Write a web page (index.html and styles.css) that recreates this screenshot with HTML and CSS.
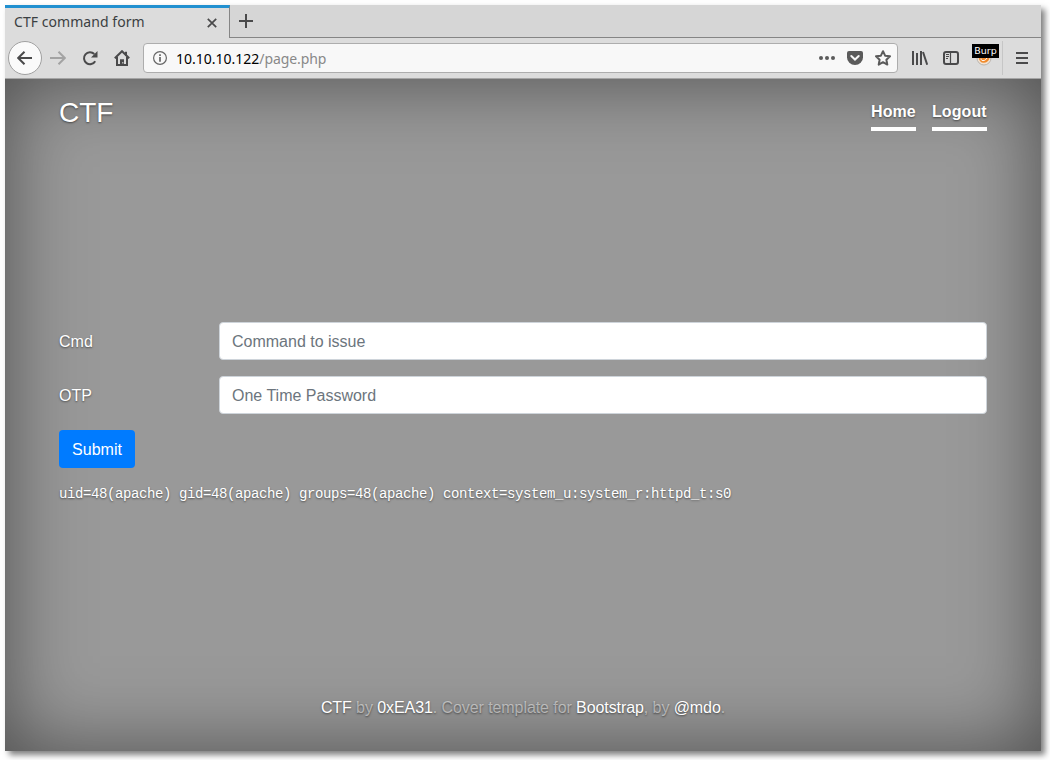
FILE: index.html
```html
<!DOCTYPE html>
<html lang="en">
<head>
<meta charset="utf-8">
<title>CTF command form</title>
<link rel="stylesheet" href="styles.css">
</head>
<body>
<div class="window">
  <div class="tabs">
    <div class="tab">
      <span class="tab-title">CTF command form</span>
      <svg class="tab-close" width="10" height="10" viewBox="0 0 10 10"><path d="M.8.8l8.4 8.4M9.2.8L.8 9.2"/></svg>
    </div>
    <div class="tab-rest">
      <svg width="14" height="14" viewBox="0 0 14 14"><path d="M7 0v14M0 7h14"/></svg>
    </div>
  </div>
  <div class="toolbar">
    <div class="back"><svg class="icon" viewBox="0 0 16 16"><path d="M15 8H1.5M7.500 1.700L1.200 8l6.300 6.300"/></svg></div>
    <svg class="icon forward" viewBox="0 0 16 16"><path d="M0 8h14.500M8.500 1.700L14.800 8l-6.300 6.300"/></svg>
    <svg class="icon reload" viewBox="0 0 16 16"><path d="M13.200 11.200A6 6 0 1 1 12.300 4"/><path class="solid" d="M15.500 1v6.500H9z"/></svg>
    <svg class="icon home" viewBox="0 0 16 16"><path d="M.8 8.300L8 1.200l7.200 7.100M3 7v8h10V7"/><path class="solid" d="M6 15V9.300h4V15zM11 1.800h2v4h-2z"/><path class="dot" d="M8.300 12h1v1.500h-1z"/></svg>
    <div class="urlbar">
      <svg class="info" width="14" height="14" viewBox="0 0 14 14"><circle cx="7" cy="7" r="6.400"/><path d="M7 6v4.700M7 3.300v1.700"/></svg>
      <span class="url"><span class="host">10.10.10.122</span>/page.php</span>
      <svg class="icon dots" viewBox="0 0 16 16"><circle cx="2" cy="8" r="2"/><circle cx="8" cy="8" r="2"/><circle cx="14" cy="8" r="2"/></svg>
      <svg class="icon pocket" viewBox="0 0 16 16"><path class="fill" d="M2 1h12a2 2 0 0 1 2 2v4.500a8 7.500 0 0 1-16 0V3a2 2 0 0 1 2-2z"/><path class="check" d="M4.300 6L8 9.500 11.700 6"/></svg>
      <svg class="icon star" viewBox="0 0 16 16"><path d="M8 1.200l2.100 4.500 4.900.6-3.600 3.400.9 4.900L8 12.200l-4.300 2.400.9-4.900L1 6.300l4.900-.6z"/></svg>
    </div>
    <svg class="icon library" viewBox="0 0 16 16"><path d="M1 1v14M5 3v12M9 1v14M11 2l4.200 12.700"/></svg>
    <svg class="icon sidebar" viewBox="0 0 16 16"><rect x="1" y="2" width="14" height="12" rx="2"/><path class="thin" d="M7.500 2v12M3 4.500h3M3 6.500h3M3 8.500h2"/></svg>
    <div class="proxy">
      <svg class="icon" viewBox="0 0 16 16"><circle class="ring" cx="8" cy="8" r="7"/><path class="flame" d="M2.500 7h11c0 3-2 5.500-5.500 5.800C5 13 3 11 2.500 7z"/><path class="gleam" d="M5 8.500c0 3 4 3 6-.5"/></svg>
      <span class="proxy-tag">Burp</span>
    </div>
    <div class="menu"><svg width="12" height="12" viewBox="0 0 12 12"><path d="M0 1h12M0 6h12M0 11h12"/></svg></div>
  </div>
  <div class="page">
    <header class="masthead">
      <h3 class="brand">CTF</h3>
      <nav class="nav"><a class="nav-home">Home</a><a class="nav-logout">Logout</a></nav>
    </header>
    <main class="form">
      <label class="row"><span class="label">Cmd</span><input class="field" type="text" placeholder="Command to issue"></label>
      <label class="row"><span class="label">OTP</span><input class="field" type="text" placeholder="One Time Password"></label>
      <button class="submit" type="button">Submit</button>
      <pre class="output">uid=48(apache) gid=48(apache) groups=48(apache) context=system_u:system_r:httpd_t:s0</pre>
    </main>
    <footer class="footer"><a>CTF</a> by <a>0xEA31</a>. Cover template for <a>Bootstrap</a>, by <a>@mdo</a>.</footer>
  </div>
</div>
</body>
</html>
```

FILE: styles.css
```css
* { box-sizing: border-box; }
body { margin: 0; padding: 5px; height: 760px; overflow: hidden; background: #fff; font-family: "Liberation Sans", sans-serif; }
.window { width: 1036px; height: 746px; display: flex; flex-direction: column; box-shadow: 4px 4px 6px rgba(0,0,0,.5); }
svg { display: block; flex: none; fill: none; stroke: #4a4a4b; stroke-width: 2; }
.icon { width: 16px; height: 16px; }

.tabs { display: flex; height: 33px; background: #dcdcdc; font-family: "Noto Sans", sans-serif; }
.tab { width: 225px; border-top: 3px solid #2190d0; border-right: 1px solid #858585; padding: 0 12px 0 9px; display: flex; align-items: center; justify-content: space-between; }
.tab-title { padding-bottom: 3px; font-size: 14px; color: #3b4042; letter-spacing: .05px; }
.tab-close { stroke-width: 1.7; }
.tab-rest { flex: 1; background: #d6d6d6; border-bottom: 1px solid #858585; padding: 9px 0 0 9px; }

.toolbar { height: 41px; flex: none; display: flex; align-items: center; background: #dcdcdc; border-bottom: 1px solid #a5a5a5; padding-left: 3px; font-family: "Noto Sans", sans-serif; }
.back { width: 34px; height: 34px; border: 1px solid #a0a0a0; border-radius: 50%; background: #fafafa; display: flex; align-items: center; justify-content: center; }
.forward { margin-left: 8px; stroke: #a3a3a3; }
.reload { margin-left: 16px; }
.home { margin-left: 16px; }
.solid { fill: #4a4a4b; stroke: none; }
.dot { fill: #ddd; stroke: none; }
.urlbar { width: 755px; height: 30px; margin-left: 13px; padding: 0 6px 0 9px; border: 1px solid #adadad; border-radius: 4px; background: #f8f8f8; display: flex; align-items: center; }
.info { stroke: #666; stroke-width: 1.2; }
.info path { stroke-width: 1.7; }
.url { flex: 1; margin-left: 9px; font-size: 14px; color: #888; letter-spacing: -.1px; }
.host { color: #000; letter-spacing: 0; }
.dots { fill: #5b5b5b; stroke: none; }
.pocket { margin-left: 12px; }
.fill { fill: #5b5b5b; stroke: none; }
.check { stroke: #f8f8f8; stroke-linecap: round; }
.star { margin-left: 12px; stroke: #5b5b5b; stroke-linejoin: round; }
.library { margin-left: 14px; }
.sidebar { margin-left: 15px; }
.thin { stroke-width: 1.2; }
.proxy { position: relative; margin-left: 17px; }
.ring { fill: #f3e3d2; stroke: #b9b4ae; stroke-width: 1; }
.flame { fill: #f08a2b; stroke: none; }
.gleam { stroke: #fff; stroke-width: 1; }
.proxy-tag { position: absolute; left: -4px; top: -6px; width: 27px; height: 14px; background: #000; color: #fff; font: 9.5px/14px "DejaVu Sans", sans-serif; text-align: center; }
.menu { height: 34px; margin-left: 10px; padding-left: 13px; border-left: 1px solid #c6c6c6; display: flex; align-items: center; }

.page { flex: 1; display: flex; flex-direction: column; justify-content: space-between; padding: 17px 54px 31px; background: #999; color: #fff; line-height: 24px; box-shadow: inset 0 0 80px rgba(0,0,0,.5); text-shadow: 0 1px 2px rgba(0,0,0,.5); }
.masthead { display: flex; justify-content: space-between; }
.brand { margin: 0; font-size: 28px; font-weight: 400; line-height: 34px; }
.nav { display: flex; gap: 16px; padding-top: 4px; font-weight: 700; }
.nav a { height: 31px; border-bottom: 4px solid #fff; letter-spacing: .1px; white-space: nowrap; }
.nav-home { width: 45px; }
.nav-logout { width: 55px; }
.form { display: flex; flex-direction: column; gap: 16px; }
.row { display: flex; align-items: center; }
.label { width: 160px; padding-top: 2px; }
.field { flex: 1; height: 38px; padding: 7px 12px 5px; border: 1px solid #ced4da; border-radius: 4px; background: #fff; font: 16px/24px "Liberation Sans", sans-serif; }
.field::placeholder { color: #6c757d; opacity: 1; }
.submit { align-self: flex-start; width: 76px; height: 38px; padding: 2px 0 0; border: 0; border-radius: 4px; background: #007bff; color: #fff; font: 16px/24px "Liberation Sans", sans-serif; }
.output { margin: 0; font: 14px/21px "Liberation Mono", monospace; letter-spacing: -.4px; }
.footer { text-align: center; color: rgba(255,255,255,.5); font-size: 16px; letter-spacing: -.08px; }
.footer a { color: #fff; }
```
